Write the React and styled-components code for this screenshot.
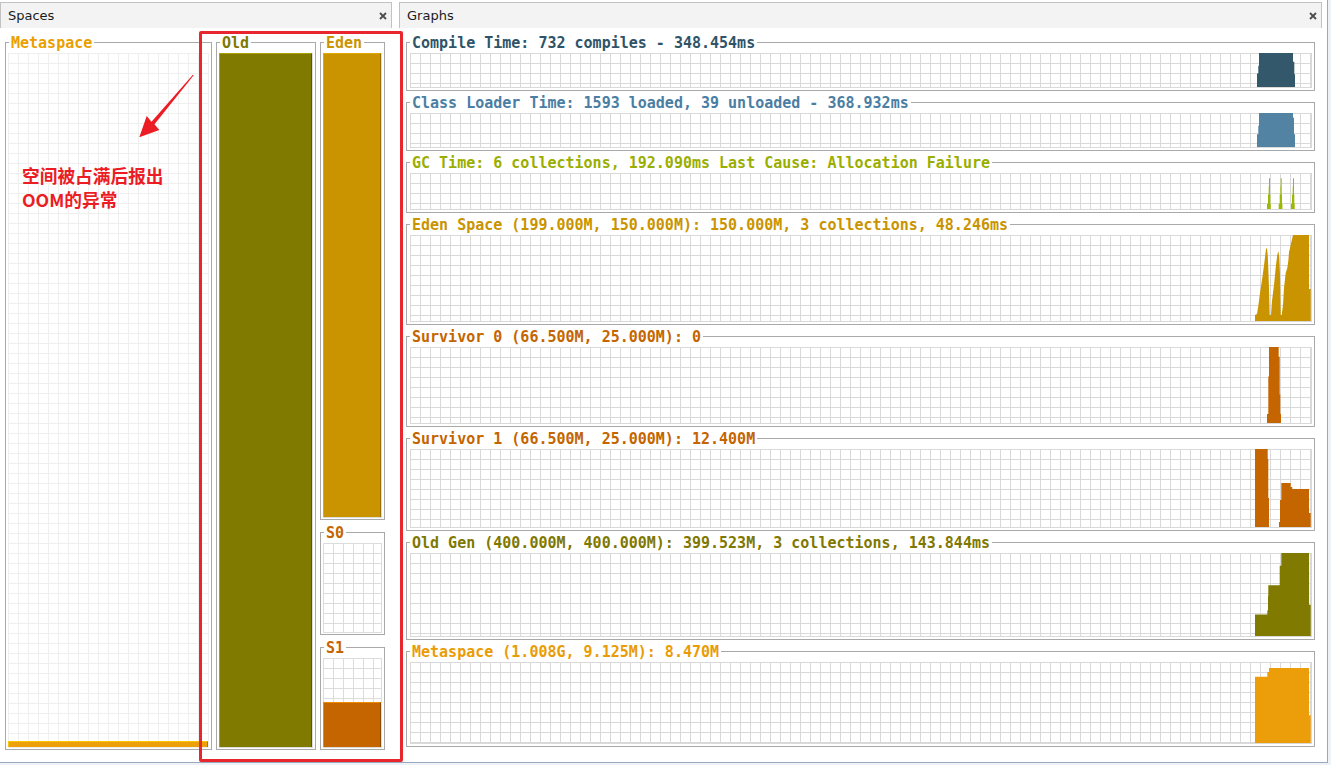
import React from "react";
import styled, { createGlobalStyle } from "styled-components";

const GlobalStyle = createGlobalStyle`
  html, body {
    margin: 0;
    padding: 0;
    background: #eef2f7;
  }
  body {
    font-family: "DejaVu Sans", sans-serif;
  }
`;

const Frame = styled.div`
  position: relative;
  box-sizing: border-box;
  width: 1328px;
  height: 763px;
  padding-top: 2px;
  display: flex;
  gap: 7px;
  background: #fff;
  border-right: 1px solid #98a9bf;
  border-bottom: 1px solid #98a9bf;
  overflow: hidden;
`;

const Panel = styled.section`
  width: ${(p) => p.$w}px;
  display: flex;
  flex-direction: column;
`;

const PanelHeader = styled.div`
  box-sizing: border-box;
  height: 26px;
  display: flex;
  align-items: center;
  justify-content: space-between;
  padding: 0 4px 0 7px;
  background: #f3f3f3;
  border: 1px solid #c2c2c2;
  border-bottom: none;
  font-size: 13px;
  color: #1b1b1b;
`;

const CloseIcon = () => (
  <svg width="8" height="8" viewBox="0 0 8 8">
    <path d="M1 1L7 7M7 1L1 7" stroke="#4d4d4d" strokeWidth="1.8" />
  </svg>
);

const SpacesBody = styled.div`
  display: flex;
  gap: 4px;
  padding: 14px 0 0 5px;
`;

const Group = styled.div`
  position: relative;
  box-sizing: border-box;
  width: ${(p) => p.$w}px;
  height: ${(p) => p.$h}px;
  display: flex;
  flex-direction: column;
  padding: 10px 2px 1px 2px;
  border: 1px solid #a9a9a9;
`;

const Legend = styled.span`
  position: absolute;
  top: -8px;
  left: 3px;
  padding: 0 2px;
  background: #fff;
  font: bold 15px/16px "DejaVu Sans Mono", "Liberation Mono", monospace;
  color: ${(p) => p.$c};
  white-space: nowrap;
`;

const Column = styled.div`
  display: flex;
  flex-direction: column;
  gap: 12px;
`;

const Well = styled.div`
  flex: 1;
  display: flex;
  flex-direction: column;
  justify-content: flex-end;
  background-image: linear-gradient(to right, ${(p) => p.$line} 1px, transparent 1px),
    linear-gradient(to bottom, ${(p) => p.$line} 1px, transparent 1px);
  background-size: 10px 10px;
  border-right: 1px solid ${(p) => p.$line};
  border-bottom: 1px solid ${(p) => p.$line};
`;

const Fill = styled.div`
  box-sizing: border-box;
  height: ${(p) => p.$h};
  background: ${(p) => p.$c};
  border-top: 1px solid ${(p) => p.$light};
  border-left: 1px solid ${(p) => p.$light};
  border-right: 1px solid ${(p) => p.$dark};
`;

const GraphsBody = styled.div`
  display: flex;
  flex-direction: column;
  gap: 11px;
  padding: 14px 7px 0 7px;
`;

const GraphBox = styled.div`
  position: relative;
  box-sizing: border-box;
  height: ${(p) => p.$h}px;
  display: flex;
  padding: 10px 2px 2px 3px;
  border: 1px solid #a9a9a9;
`;

const Chart = styled.div`
  position: relative;
  flex: 1;
  border-right: 1px solid #d9d9d9;
  border-bottom: 1px solid #d9d9d9;
  background-image: linear-gradient(to right, #d9d9d9 1px, transparent 1px),
    linear-gradient(to bottom, #d9d9d9 1px, transparent 1px);
  background-size: 10px 10px;
`;

const Plot = styled.svg`
  position: absolute;
  top: 0;
  right: 0;
  width: 80px;
  height: 100%;
  display: block;
`;

const Highlight = styled.div`
  position: absolute;
  left: 199px;
  top: 31px;
  width: 204px;
  height: 731px;
  box-sizing: border-box;
  border: 3px solid #e8262e;
  border-radius: 2px;
  pointer-events: none;
`;

const Arrow = styled.svg`
  position: absolute;
  left: 135px;
  top: 70px;
`;

const Note = styled.div`
  position: absolute;
  left: 22px;
  top: 163px;
  font: bold 17.7px/24px "Noto Sans CJK SC", "Noto Sans", sans-serif;
  color: #ec1c24;
`;

const spike = (x) =>
  `${x},35 ${x},30 ${x + 1},30 ${x + 1},21 ${x + 1.7},21 ${x + 1.7},13 ${x + 2},13 ${x + 2},5 ${x + 3},5 ${x + 3},21 ${x + 3.3},21 ${x + 3.3},30 ${x + 3.7},30 ${x + 3.7},35`;

const graphs = [
  {
    title: "Compile Time: 732 compiles - 348.454ms",
    color: "#2f5468",
    fill: "#33576b",
    h: 49,
    dh: 35,
    shapes: ["26,35 26,21 27.3,21 27.3,13 28,13 28,0 62,0 62,9 63.3,9 63.3,22 64,22 64,35"],
  },
  {
    title: "Class Loader Time: 1593 loaded, 39 unloaded - 368.932ms",
    color: "#4a7ea3",
    fill: "#5283a3",
    h: 49,
    dh: 35,
    shapes: ["26,35 26,22 27.3,22 27.3,13 28,13 28,0 62,0 62,5 63,5 63,22 64,22 64,35"],
  },
  {
    title: "GC Time: 6 collections, 192.090ms Last Cause: Allocation Failure",
    color: "#9aae00",
    fill: "#9cb800",
    h: 51,
    dh: 35,
    shapes: [spike(36), spike(47.7), spike(60)],
  },
  {
    title: "Eden Space (199.000M, 150.000M): 150.000M, 3 collections, 48.246ms",
    color: "#c99400",
    fill: "#c99400",
    h: 101,
    dh: 86,
    shapes: [
      "24,86 24,80 26,79 27.3,71 29.3,56 31.3,43 33.3,28 35,14 36,13 36.7,20 37.3,33 38,54 38.7,80 40,80 41,66 43,50 45,30 46.3,20 47.3,16 48.3,22 49,40 49.7,80 50.7,80 52,70 53,53 54.7,38 56.3,33 57.3,26 58,17 59.7,10 62,0 78,0 78,54 79.7,54 79.7,86",
    ],
  },
  {
    title: "Survivor 0 (66.500M, 25.000M): 0",
    color: "#c46500",
    fill: "#c46500",
    h: 91,
    dh: 77,
    shapes: ["36,77 36,68 37.3,68 37.3,30 38,30 38,0 47.7,0 47.7,10 48.7,10 48.7,48 49.3,48 49.3,68 50,68 50,77"],
  },
  {
    title: "Survivor 1 (66.500M, 25.000M): 12.400M",
    color: "#c46500",
    fill: "#c46500",
    h: 93,
    dh: 78,
    shapes: [
      "24,78 24,0 36.7,0 36.7,10 37.3,10 37.3,49 38,49 38,78",
      "48,78 48,73 49,73 49,51 50.3,51 50.3,34 59.7,34 59.7,38 61.3,38 61.3,40 78,40 78,64 79.7,64 79.7,78",
    ],
  },
  {
    title: "Old Gen (400.000M, 400.000M): 399.523M, 3 collections, 143.844ms",
    color: "#7f7800",
    fill: "#807a00",
    h: 98,
    dh: 85,
    shapes: [
      "24,85 24,63 36.3,63 36.3,59 37,59 37,44 37.3,44 37.3,33 48.7,33 48.7,13 50.3,13 50.3,0 78,0 78,53 79.7,53 79.7,85",
    ],
  },
  {
    title: "Metaspace (1.008G, 9.125M): 8.470M",
    color: "#e99c05",
    fill: "#eb9d0a",
    h: 96,
    dh: 82,
    shapes: ["24,82 24,15 36.3,15 36.3,10 38,10 38,6 78,6 78,54 79.7,54 79.7,82"],
  },
];

const Graph = ({ g }) => (
  <GraphBox $h={g.h}>
    <Legend $c={g.color}>{g.title}</Legend>
    <Chart>
      <Plot viewBox={`0 0 80 ${g.dh}`} preserveAspectRatio="none">
        {g.shapes.map((pts, i) => (
          <polygon key={i} points={pts} fill={g.fill} />
        ))}
      </Plot>
    </Chart>
  </GraphBox>
);

export default function App() {
  return (
    <>
      <GlobalStyle />
      <Frame>
        <Panel $w={392}>
          <PanelHeader>
            Spaces
            <CloseIcon />
          </PanelHeader>
          <SpacesBody>
            <Group $w={207} $h={708}>
              <Legend $c="#e9a000">Metaspace</Legend>
              <Well $line="#efefef">
                <Fill $h="6px" $c="#eba00c" $light="#fcc400" $dark="#b07800" />
              </Well>
            </Group>
            <Group $w={100} $h={708}>
              <Legend $c="#7f7800">Old</Legend>
              <Well $line="#dcdcdc">
                <Fill $h="100%" $c="#807a00" $light="#aaa200" $dark="#5e5800" />
              </Well>
            </Group>
            <Column>
              <Group $w={65} $h={478}>
                <Legend $c="#c99400">Eden</Legend>
                <Well $line="#dcdcdc">
                  <Fill $h="100%" $c="#c99400" $light="#e2aa00" $dark="#9a7000" />
                </Well>
              </Group>
              <Group $w={65} $h={103}>
                <Legend $c="#c46500">S0</Legend>
                <Well $line="#dcdcdc" />
              </Group>
              <Group $w={65} $h={103}>
                <Legend $c="#c46500">S1</Legend>
                <Well $line="#dcdcdc">
                  <Fill $h="45px" $c="#c46500" $light="#f28a00" $dark="#8f4a00" />
                </Well>
              </Group>
            </Column>
          </SpacesBody>
        </Panel>
        <Panel $w={923}>
          <PanelHeader>
            Graphs
            <CloseIcon />
          </PanelHeader>
          <GraphsBody>
            {graphs.map((g) => (
              <Graph key={g.title} g={g} />
            ))}
          </GraphsBody>
        </Panel>

        <Highlight />
        <Arrow width="65" height="72" viewBox="0 0 65 72">
          <polygon
            points="57.9,4.7 58.7,5.3 19.5,54.3 24.3,60 4.3,67.3 11.7,46 16.5,51.7"
            fill="#ec1c24"
          />
        </Arrow>
        <Note>
          空间被占满后报出
          <br />
          OOM的异常
        </Note>
      </Frame>
    </>
  );
}
